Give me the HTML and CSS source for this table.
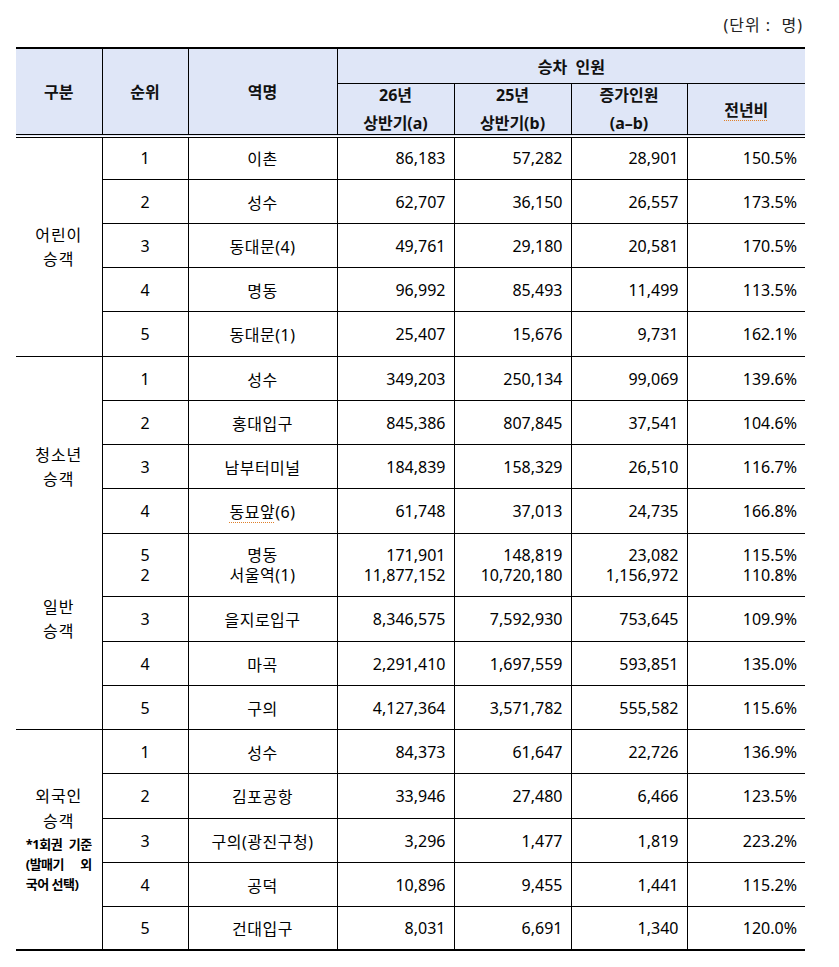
FILE: index.html
```html
<!DOCTYPE html>
<html lang="ko">
<head>
<meta charset="utf-8">
<title>승차 인원</title>
<link rel="stylesheet" href="styles.css">
</head>
<body>
<div class="wrap">
  <div class="unit">(단위 :&nbsp; 명)</div>
  <table class="tbl">
    <colgroup>
      <col class="c-grp"><col class="c-rank"><col class="c-name"><col class="c-num"><col class="c-num"><col class="c-inc"><col class="c-pct">
    </colgroup>
    <thead>
      <tr class="h1">
        <th rowspan="2" class="hb">구분</th>
        <th rowspan="2" class="hb">순위</th>
        <th rowspan="2" class="hb">역명</th>
        <th colspan="4">승차&nbsp;&nbsp;인원</th>
      </tr>
      <tr class="h2">
        <th class="hb"><div class="two"><span>26년</span><span>상반기(a)</span></div></th>
        <th class="hb"><div class="two"><span>25년</span><span>상반기(b)</span></div></th>
        <th class="hb"><div class="two"><span>증가인원</span><span>(a–b)</span></div></th>
        <th class="hb"><span class="squiggle">전년비</span></th>
      </tr>
    </thead>
    <tbody>
      <tr>
        <td rowspan="5" class="grp"><span class="lbl">어린이<br>승객</span></td>
        <td>1</td><td class="nm">이촌</td><td class="n">86,183</td><td class="n">57,282</td><td class="n">28,901</td><td class="n">150.5%</td>
      </tr>
      <tr><td>2</td><td class="nm">성수</td><td class="n">62,707</td><td class="n">36,150</td><td class="n">26,557</td><td class="n">173.5%</td></tr>
      <tr><td>3</td><td class="nm">동대문(4)</td><td class="n">49,761</td><td class="n">29,180</td><td class="n">20,581</td><td class="n">170.5%</td></tr>
      <tr><td>4</td><td class="nm">명동</td><td class="n">96,992</td><td class="n">85,493</td><td class="n">11,499</td><td class="n">113.5%</td></tr>
      <tr class="r45"><td>5</td><td class="nm">동대문(1)</td><td class="n">25,407</td><td class="n">15,676</td><td class="n">9,731</td><td class="n">162.1%</td></tr>

      <tr>
        <td rowspan="8" class="grp">
          <div class="pair">
            <span class="lbl">청소년<br>승객</span>
            <span class="lbl">일반<br>승객</span>
          </div>
        </td>
        <td>1</td><td class="nm">성수</td><td class="n">349,203</td><td class="n">250,134</td><td class="n">99,069</td><td class="n">139.6%</td>
      </tr>
      <tr><td>2</td><td class="nm">홍대입구</td><td class="n">845,386</td><td class="n">807,845</td><td class="n">37,541</td><td class="n">104.6%</td></tr>
      <tr><td>3</td><td class="nm">남부터미널</td><td class="n">184,839</td><td class="n">158,329</td><td class="n">26,510</td><td class="n">116.7%</td></tr>
      <tr class="r45"><td>4</td><td class="nm"><span class="squiggle">동묘앞</span>(6)</td><td class="n">61,748</td><td class="n">37,013</td><td class="n">24,735</td><td class="n">166.8%</td></tr>
      <tr class="dual">
        <td>5<br>2</td>
        <td class="nm">명동<br>서울역(1)</td>
        <td class="n">171,901<br>11,877,152</td>
        <td class="n">148,819<br>10,720,180</td>
        <td class="n">23,082<br>1,156,972</td>
        <td class="n">115.5%<br>110.8%</td>
      </tr>
      <tr class="r45"><td>3</td><td class="nm">을지로입구</td><td class="n">8,346,575</td><td class="n">7,592,930</td><td class="n">753,645</td><td class="n">109.9%</td></tr>
      <tr><td>4</td><td class="nm">마곡</td><td class="n">2,291,410</td><td class="n">1,697,559</td><td class="n">593,851</td><td class="n">135.0%</td></tr>
      <tr><td>5</td><td class="nm">구의</td><td class="n">4,127,364</td><td class="n">3,571,782</td><td class="n">555,582</td><td class="n">115.6%</td></tr>

      <tr>
        <td rowspan="5" class="grp">
          <div class="fgn">
            <span class="lbl l25">외국인</span>
            <span class="lbl l25">승객</span>
            <span class="note">
              <span class="jl">*1회권 기준</span>
              <span class="jl">(발매기 외</span>
              <span class="ll">국어 선택)</span>
            </span>
          </div>
        </td>
        <td>1</td><td class="nm">성수</td><td class="n">84,373</td><td class="n">61,647</td><td class="n">22,726</td><td class="n">136.9%</td>
      </tr>
      <tr class="r45"><td>2</td><td class="nm">김포공항</td><td class="n">33,946</td><td class="n">27,480</td><td class="n">6,466</td><td class="n">123.5%</td></tr>
      <tr><td>3</td><td class="nm">구의(광진구청)</td><td class="n">3,296</td><td class="n">1,477</td><td class="n">1,819</td><td class="n">223.2%</td></tr>
      <tr><td>4</td><td class="nm">공덕</td><td class="n">10,896</td><td class="n">9,455</td><td class="n">1,441</td><td class="n">115.2%</td></tr>
      <tr class="r43"><td>5</td><td class="nm">건대입구</td><td class="n">8,031</td><td class="n">6,691</td><td class="n">1,340</td><td class="n">120.0%</td></tr>
    </tbody>
  </table>
</div>
</body>
</html>
```

FILE: styles.css
```css
html, body {
  margin: 0;
  padding: 0;
  background: #ffffff;
}

body {
  font-family: "Noto Sans", "Noto Sans CJK KR", sans-serif;
  font-size: 16px;
  color: #000000;
}

.wrap {
  width: 789px;
  margin-left: 16px;
}

.unit {
  height: 47px;
  box-sizing: border-box;
  padding-top: 13px;
  padding-right: 2px;
  line-height: 24px;
  text-align: right;
  letter-spacing: 1px;
  color: #222222;
}

.tbl {
  width: 789px;
  table-layout: fixed;
  border-collapse: collapse;
  border-top: 2px solid #000;
  border-bottom: 2px solid #000;
  border-left: hidden;
  border-right: hidden;
}

.c-grp { width: 86px; }
.c-rank { width: 86px; }
.c-name { width: 149px; }
.c-num { width: 117px; }
.c-inc { width: 116px; }
.c-pct { width: 118px; }

.tbl th,
.tbl td {
  border: 1px solid #000;
  padding: 0;
  vertical-align: middle;
  text-align: center;
}

.tbl th {
  background: #dfe6f7;
  font-weight: 700;
  color: #111;
}

.tbl th.hb {
  border-bottom: 4px double #000;
}

.h1 { height: 35px; }
.h2 { height: 50px; }

.two {
  display: flex;
  flex-direction: column;
  align-items: center;
  line-height: 28px;
  margin: -3px 0;
}

.squiggle {
  text-decoration: underline dotted #e0802a;
  text-decoration-thickness: 1px;
  text-underline-offset: 4px;
}

tbody tr { height: 44px; }
tbody tr.r45 { height: 45px; }
tbody tr.r43 { height: 43px; }
tbody tr.dual { height: 63px; line-height: 20px; }

.tbl td.n {
  text-align: right;
  padding-right: 8px;
}

.tbl td.nm {
  letter-spacing: 0.5px;
}

.grp {
  line-height: 24px;
}

.lbl {
  display: block;
  letter-spacing: 1px;
}

.l25 {
  line-height: 25px;
}

.pair {
  display: flex;
  flex-direction: column;
  align-items: center;
  gap: 104px;
}

.fgn {
  display: flex;
  flex-direction: column;
  align-items: center;
}

.note {
  display: block;
  width: 66px;
  font-size: 13px;
  font-weight: 700;
  line-height: 20px;
  letter-spacing: -0.5px;
}

.jl {
  display: block;
  text-align: justify;
  text-align-last: justify;
}

.ll {
  display: block;
  text-align: left;
}
```
